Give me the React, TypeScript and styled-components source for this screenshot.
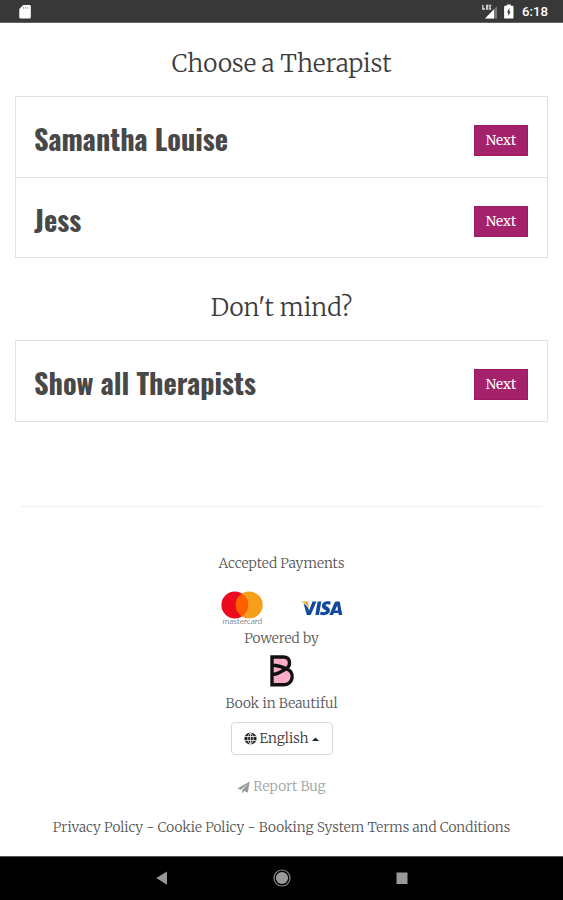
import React from "react";
import styled, { createGlobalStyle } from "styled-components";

const GlobalStyle = createGlobalStyle`
  * { box-sizing: border-box; }
  body { margin: 0; background: #fff; }
`;

const Screen = styled.div`
  width: 563px;
  height: 900px;
  display: flex;
  flex-direction: column;
  overflow: hidden;
  background: #fff;
  color: #555;
  font: 300 13.7px/20px Merriweather, "DejaVu Serif Condensed", serif;
`;

const StatusBar = styled.header`
  flex: none;
  display: flex;
  align-items: center;
  height: 23px;
  padding: 1px 15px 0 18px;
  background: #383838;
  border-bottom: 1px solid #626262;
  color: #fff;
`;

const StatusIcons = styled.div`
  display: flex;
  align-items: center;
  margin-left: auto;
`;

const Clock = styled.time`
  margin-left: 4px;
  font: 500 13.2px/20px Roboto, sans-serif;
`;

const Content = styled.main`
  flex: 1;
  min-height: 0;
  padding: 0 15px;
`;

const Heading = styled.h2<{ $gap: number }>`
  margin: 0;
  padding-top: ${(p) => p.$gap}px;
  padding-bottom: 16px;
  text-align: center;
  font-size: 24.4px;
  font-weight: 300;
  line-height: 32px;
  color: #3c3c3c;
`;

const List = styled.ul`
  margin: 0;
  padding: 0;
  list-style: none;
  border: 1px solid #e2e2e2;
`;

const Row = styled.li`
  display: flex;
  align-items: center;
  justify-content: space-between;
  height: 80px;
  padding: 0 19px 0 18px;

  & + & {
    border-top: 1px solid #e2e2e2;
  }
`;

const Name = styled.span`
  margin-top: 2px;
  font: 700 28.3px/40px Oswald, "Open Sans", sans-serif;
  color: #484848;
`;

const NextButton = styled.button`
  width: 54px;
  height: 31px;
  margin-top: 7px;
  padding: 1px 0 0;
  border: 1px solid #9b1a62;
  background: #a3226b;
  color: #fff;
  font: 400 13.4px/28px Merriweather, "DejaVu Serif Condensed", serif;
`;

const Divider = styled.hr`
  margin: 84px 6px 0;
  border: 0;
  border-top: 1px solid #eee;
`;

const Footer = styled.footer`
  display: flex;
  flex-direction: column;
  align-items: center;
  padding-top: 47px;
`;

const Payments = styled.div`
  display: flex;
  align-items: flex-start;
  gap: 35px;
  height: 38px;
  margin-top: 17px;
`;

const FooterText = styled.div`
  line-height: 20px;
  white-space: nowrap;
`;

const BrandMark = styled.svg`
  margin: 5px 0 6px;
`;

const LanguageButton = styled.button`
  display: flex;
  align-items: center;
  justify-content: center;
  width: 102px;
  height: 33px;
  margin-top: 8px;
  padding: 0;
  border: 1px solid #d6d6d6;
  border-radius: 4px;
  background: #fff;
  color: #333;
  font: inherit;
  line-height: 20px;

  span { margin: 0 4px 0 3px; }
`;

const ReportLink = styled.a`
  display: flex;
  align-items: center;
  gap: 3px;
  margin-top: 22px;
  color: #a0a0a0;
`;

const Legal = styled.nav`
  margin-top: 21px;
  font-size: 13.66px;
  white-space: nowrap;
`;

const NavBar = styled.nav`
  flex: none;
  display: flex;
  align-items: center;
  justify-content: center;
  gap: 101px;
  height: 44px;
  padding-bottom: 2px;
  background: #000;
  border-top: 1px solid #555;
`;

const choices = ["Samantha Louise", "Jess"];

function Choice({ name }: { name: string }) {
  return (
    <Row>
      <Name>{name}</Name>
      <NextButton>Next</NextButton>
    </Row>
  );
}

function Mastercard() {
  return (
    <svg width="44" height="36" viewBox="0 0 44 36">
      <circle cx="14.8" cy="14" r="13.4" fill="#eb0a1e" />
      <circle cx="29.3" cy="14" r="13.4" fill="#f79e1b" />
      <path d="M22 2.6a13.4 13.4 0 0 1 0 22.8 13.4 13.4 0 0 1 0-22.8z" fill="#ff5f00" />
      <text x="2.5" y="33.4" fontFamily="Lato, sans-serif" fontSize="7.8" fill="#222" textLength="39.5" lengthAdjust="spacingAndGlyphs">mastercard</text>
    </svg>
  );
}

function Visa() {
  return (
    <svg width="44" height="36" viewBox="0 0 44 36">
      <g fill="#114a9b">
        <path d="M18.6 10.4h3.7L20 24h-3.7z" />
        <path d="M13.5 10.4h4L11.7 24H7.8L4.6 12.6c2 1 3.8 2.8 4.8 5l.6 2.1z" />
        <path d="M31.7 10.8l-.6 3c-1.400-.6-4.300-.9-4.400.5 0 1.300 4.200 1.500 4.200 5 0 4.800-6.300 5.700-9.900 4.300l.6-3.200c1.500.8 5.300 1.300 5.400-.3.100-1.500-4.100-1.500-4.100-5 0-4.500 5.600-5.500 8.800-4.300z" />
        <path fillRule="evenodd" d="M37.700 10.400h3L43.300 24h-3.400l-.4-2h-4.700L34 24h-3.700l5.300-12.500c.3-.7 1-1.100 2.100-1.100zm.5 4.200-2.200 4.900h3z" />
      </g>
      <path d="M2 10.400h5.400c1 0 1.500.4 1.700 1.300l1.200 6C9 14.300 6.200 12 2 10.800z" fill="#f2a02b" />
    </svg>
  );
}

export default function App() {
  return (
    <Screen>
      <GlobalStyle />
      <StatusBar>
        <svg width="14" height="16" viewBox="0 0 14 16">
          <path d="M5.300 1h6.200a1.300 1.300 0 0 1 1.300 1.300v11a1.300 1.300 0 0 1-1.300 1.300H2.600a1.300 1.300 0 0 1-1.300-1.300V5z" fill="#fff" />
          <path d="M5.500 3v1.800M7.600 3v1.800M9.700 3v1.800" stroke="#aaa" strokeWidth="1" />
        </svg>
        <StatusIcons>
          <svg width="18" height="17" viewBox="0 0 18 17">
            <path d="M15 3.200v12.300H3z" fill="#777" />
            <path d="M12 6.200v9.300H3z" fill="#fff" />
            <path d="M.8 2v4h2.200M6.500 2.500H4.700V6h1.800M4.700 4.200h1.600M9.200 2.500H8V6h1.200" fill="none" stroke="#ddd" strokeWidth="1.300" />
          </svg>
          <svg width="18" height="17" viewBox="0 0 18 17">
            <path d="M6.800 1.500h4v1.300h1.800c.5 0 .9.400.9.900v11c0 .5-.4.900-.9.900H5a.9.900 0 0 1-.9-.9v-11c0-.5.4-.9.900-.9h1.800z" fill="#fff" />
            <path d="M9.500 5v3.700h1.200l-2.400 4.400V9.600H7z" fill="#383838" />
          </svg>
        </StatusIcons>
        <Clock>6:18</Clock>
      </StatusBar>

      <Content>
        <Heading $gap={25}>Choose a Therapist</Heading>
        <List>
          {choices.map((name) => <Choice key={name} name={name} />)}
        </List>
        <Heading $gap={34}>Don't mind?</Heading>
        <List>
          <Choice name="Show all Therapists" />
        </List>

        <Divider />

        <Footer>
          <FooterText>Accepted Payments</FooterText>
          <Payments>
            <Mastercard />
            <Visa />
          </Payments>
          <FooterText>Powered by</FooterText>
          <BrandMark width="26" height="34" viewBox="0 0 26 34">
            <path d="M3 3h11.500c7 0 7.500 8.500 3 11.200C24 17 25 22 22.500 26.500c-1.500 3-4.500 4.300-8 4.300H3z" fill="#fbaec5" />
            <path d="M3 20.500V30.800h11.500c9.500 0 12-12 3.500-15.800C13 12.700 9 11 3 11.200V3h11.500c7.500 0 7.800 9.500 1.800 12.200L10 18.800c-2 1.200-4.500 1.700-7 1.700zM3 3v27.800" fill="none" stroke="#111" strokeWidth="3.400" strokeLinejoin="miter" />
          </BrandMark>
          <FooterText>Book in Beautiful</FooterText>
          <LanguageButton>
            <svg width="13" height="13" viewBox="0 0 13 13">
              <circle cx="6.500" cy="6.500" r="6.100" fill="#222" />
              <path d="M.5 4.500h12M.5 8.600h12M6.500.4v12.200M6.500.4C2.800 4 2.800 9 6.500 12.600M6.500.4c3.700 3.600 3.700 8.600 0 12.200" fill="none" stroke="#fff" strokeWidth=".8" />
            </svg>
            <span>English</span>
            <svg width="7" height="5" viewBox="0 0 7 5">
              <path d="M0 5 3.500 1.500 7 5z" fill="#222" />
            </svg>
          </LanguageButton>
          <ReportLink>
            <svg width="13" height="13" viewBox="0 0 13 13">
              <path d="M12.700.4 10.800 11.500 7.300 10 5.200 12.600V9.200L11 2.700 3.900 8.700.5 7.400z" fill="#999" />
            </svg>
            Report Bug
          </ReportLink>
          <Legal>Privacy Policy - Cookie Policy - Booking System Terms and Conditions</Legal>
        </Footer>
      </Content>

      <NavBar>
        <svg width="20" height="20" viewBox="0 0 20 20">
          <path d="M15 3.500v13.200L4.300 10.100z" fill="#999" />
        </svg>
        <svg width="18" height="20" viewBox="0 0 18 20">
          <circle cx="9" cy="10" r="8" fill="none" stroke="#888" strokeWidth="1.200" />
          <circle cx="9" cy="10" r="6.100" fill="#999" />
        </svg>
        <svg width="20" height="20" viewBox="0 0 20 20">
          <path d="M4.500 4.500h11v11.500h-11z" fill="#999" />
        </svg>
      </NavBar>
    </Screen>
  );
}
